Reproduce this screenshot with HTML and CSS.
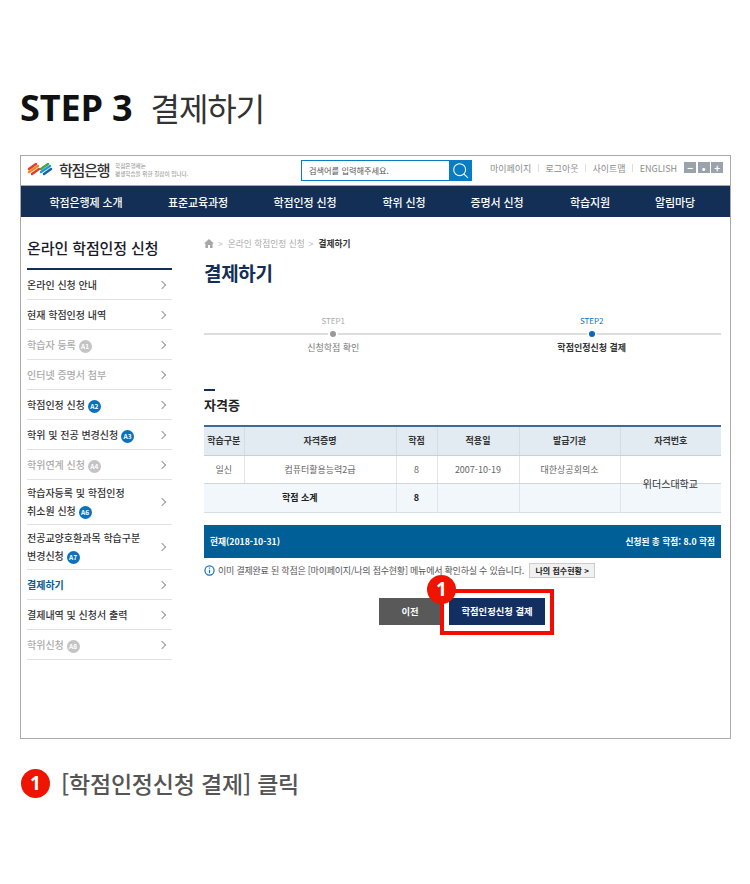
FILE: index.html
```html
<!DOCTYPE html>
<html lang="ko">
<head>
<meta charset="utf-8">
<title>STEP 3 결제하기</title>
<link rel="stylesheet" href="styles.css">
</head>
<body>
<h1 class="page-title"><span class="step-no">STEP 3</span><span class="step-name">결제하기</span></h1>
<div class="frame">
  <header class="top">
    <svg class="logo" viewBox="0 0 27 16" width="27" height="16" aria-hidden="true">
      <g fill="none" stroke-width="2.5" stroke-linecap="round">
        <path d="M2 8 L9 3" stroke="#e8392f"/><path d="M2 11 L11 5" stroke="#f08a1d"/><path d="M5 13 L12 8" stroke="#e8392f"/>
        <path d="M14 8 L21 3" stroke="#43a64a"/><path d="M14 11 L23 5" stroke="#1f9ad6"/><path d="M17 13 L24 8" stroke="#1b5fa8"/>
      </g>
    </svg>
    <span class="brand">학점은행</span>
    <span class="tagline">학점은행제는<br>평생학습을 위한 길잡이 입니다.</span>
    <div class="search">
      <span class="search-text">검색어를 입력해주세요.</span>
      <span class="search-btn">
        <svg viewBox="0 0 16 16" width="17" height="17" aria-hidden="true"><circle cx="7.2" cy="7.2" r="5.6" fill="none" stroke="#fff" stroke-width="1"/><path d="M11.3 11.3 L15 15" stroke="#fff" stroke-width="1"/></svg>
      </span>
    </div>
    <nav class="util">
      <span>마이페이지</span><i></i><span>로그아웃</span><i></i><span>사이트맵</span><i></i><span>ENGLISH</span>
    </nav>
    <div class="zoom-btns">
      <span class="zb">−</span><span class="zb">•</span><span class="zb">+</span>
    </div>
  </header>
  <nav class="gnb">
    <a>학점은행제 소개</a><a>표준교육과정</a><a>학점인정 신청</a><a>학위 신청</a><a>증명서 신청</a><a>학습지원</a><a>알림마당</a>
  </nav>
  <div class="body">
    <aside class="side">
      <h2 class="side-title">온라인 학점인정 신청</h2>
      <ul class="menu">
        <li><span>온라인 신청 안내</span></li>
        <li><span>현재 학점인정 내역</span></li>
        <li class="off"><span>학습자 등록 <b class="tag">A1</b></span></li>
        <li class="off"><span>인터넷 증명서 첨부</span></li>
        <li><span>학점인정 신청 <b class="tag">A2</b></span></li>
        <li><span>학위 및 전공 변경신청 <b class="tag">A3</b></span></li>
        <li class="off"><span>학위연계 신청 <b class="tag">A4</b></span></li>
        <li class="two"><span>학습자등록 및 학점인정<br>취소원 신청 <b class="tag">A6</b></span></li>
        <li class="two"><span>전공교양호환과목 학습구분<br>변경신청 <b class="tag">A7</b></span></li>
        <li class="cur"><span>결제하기</span></li>
        <li><span>결제내역 및 신청서 출력</span></li>
        <li class="off"><span>학위신청 <b class="tag">A8</b></span></li>
      </ul>
    </aside>
    <main class="main">
      <div class="crumb">
        <svg viewBox="0 0 10 9" width="10" height="9" aria-hidden="true"><path d="M5 0 L10 4.6 H8.6 V9 H6 V6 H4 V9 H1.4 V4.6 H0 Z" fill="#a8a8a8"/></svg>
        <em>&gt;</em><span>온라인 학점인정 신청</span><em>&gt;</em><strong>결제하기</strong>
      </div>
      <h2 class="main-title">결제하기</h2>
      <div class="steps">
        <div class="st"><span class="st-no">STEP1</span><span class="dot"></span><span class="st-label">신청학점 확인</span></div>
        <div class="st on"><span class="st-no">STEP2</span><span class="dot"></span><span class="st-label">학점인정신청 결제</span></div>
      </div>
      <h3 class="sec">자격증</h3>
      <div class="tbl-wrap">
        <table class="tbl">
          <colgroup><col class="c1"><col class="c2"><col class="c3"><col class="c4"><col class="c5"><col class="c6"></colgroup>
          <thead><tr><th>학습구분</th><th>자격증명</th><th>학점</th><th>적용일</th><th>발급기관</th><th>자격번호</th></tr></thead>
          <tbody>
            <tr><td>일신</td><td>컴퓨터활용능력2급</td><td>8</td><td>2007-10-19</td><td>대한상공회의소</td><td></td></tr>
            <tr class="sum"><td colspan="2">학점 소계</td><td>8</td><td></td><td></td><td></td></tr>
          </tbody>
        </table>
        <span class="overlay-cell">위더스대학교</span>
      </div>
      <div class="bar"><span>현재(2018-10-31)</span><span>신청된 총 학점: 8.0 학점</span></div>
      <div class="note">
        <svg viewBox="0 0 12 12" width="11" height="11" aria-hidden="true"><circle cx="6" cy="6" r="5" fill="none" stroke="#0a72bd" stroke-width="1.3"/><path d="M6 5.2 V9" stroke="#0a72bd" stroke-width="1.3"/><circle cx="6" cy="3.4" r=".8" fill="#0a72bd"/></svg>
        <span class="note-text">이미 결제완료 된 학점은 [마이페이지/나의 접수현황] 메뉴에서 확인하실 수 있습니다.</span>
        <span class="mini-btn">나의 접수현황 &gt;</span>
      </div>
      <div class="btns">
        <span class="btn prev">이전</span>
        <span class="btn pay">학점인정신청 결제
          <span class="hl"></span>
          <span class="num hl-num">1</span>
        </span>
      </div>
    </main>
  </div>
</div>
<p class="legend"><span class="num">1</span><span class="legend-text">[학점인정신청 결제] 클릭</span></p>
</body>
</html>
```
FILE: styles.css
```css
* { box-sizing: border-box; }
html, body { margin: 0; padding: 0; }
body {
  width: 750px;
  height: 884px;
  overflow: hidden;
  background: #fff;
  font-family: "Noto Sans CJK KR", "Noto Sans", sans-serif;
  color: #333;
}
.page-title {
  margin: 0;
  padding: 84px 0 0 20px;
  height: 155px;
  font-weight: 400;
  line-height: 46px;
  color: #222;
  display: flex;
  align-items: baseline;
}
.step-no { font: 700 36px/46px "Open Sans", sans-serif; color: #111; letter-spacing: -.15px; }
.step-name { font-size: 32px; margin-left: 18px; letter-spacing: -1px; color: #333; }

.frame {
  margin-left: 20px;
  width: 711px;
  height: 584px;
  border: 1px solid #aaa;
  overflow: hidden;
}
.top {
  height: 30px;
  display: flex;
  align-items: center;
  padding-left: 6px;
  border-bottom: 1px solid #aaa;
  position: relative;
}
.logo { flex: none; margin-top: -3px; }
.brand { width: 50px; font-size: 15px; font-weight: 500; color: #333; margin-left: 5px; letter-spacing: -1.2px; line-height: 20px; margin-top: -2px; white-space: nowrap; }
.tagline { font-size: 5.6px; line-height: 8.5px; color: #888; margin-left: 6px; margin-top: -1px; width: 186px; white-space: nowrap; flex: none; }
.search {
  width: 171px;
  height: 21px;
  display: flex;
  border: 1px solid #0a7cc4;
  border-width: 1px 0 1px 1px;
  flex: none;
}
.search-text { flex: 1; font-size: 8.2px; line-height: 19px; color: #555; padding-left: 7px; }
.search-btn { width: 23px; margin-top: -1px; height: 21px; background: #0a7cc4; display: flex; align-items: center; justify-content: center; }
.util { display: flex; align-items: center; margin-left: 18px; font-size: 9px; color: #8c8c8c; white-space: nowrap; margin-top: -5px; }
.util i { width: 1px; height: 8px; background: #ddd; margin: 0 6.5px; }
.zoom-btns { display: flex; gap: 1.5px; margin-left: 7px; margin-top: -6px; }
.zb { width: 12px; height: 11px; background: #9aa3ab; color: #fff; font-size: 10px; font-weight: 700; line-height: 11px; text-align: center; }

.gnb {
  height: 31px;
  background: #132f55;
  display: grid;
  grid-template-columns: 130px 94px 120px 78px 108px 78px 92px;
  align-items: center;
  text-align: center;
  color: #fff;
  font-size: 11px;
  font-weight: 500;
  letter-spacing: -.1px;
  white-space: nowrap;
}

.body { display: flex; }
.side { width: 145px; margin-left: 6px; flex: none; }
.side-title {
  margin: 0;
  height: 53px;
  padding-top: 20px;
  font-size: 15px;
  line-height: 22px;
  font-weight: 500;
  color: #1a1a2a;
  border-bottom: 2px solid #132f55;
  white-space: nowrap;
  letter-spacing: -.1px;
}
.menu { list-style: none; margin: 0; padding: 0; }
.menu li {
  height: 30px;
  display: flex;
  align-items: center;
  border-bottom: 1px solid #e2e2e2;
  font-size: 10px;
  font-weight: 500;
  line-height: 18px;
  color: #333;
  position: relative;
  white-space: nowrap;
}
.menu li::after {
  content: "";
  position: absolute;
  right: 7px;
  top: 50%;
  width: 5px;
  height: 5px;
  margin-top: -3px;
  border-top: 1px solid #999;
  border-right: 1px solid #999;
  transform: rotate(45deg);
}
.menu li.two { height: 45px; }
.menu li.off { color: #aaa; }
.menu li.cur { color: #0a5a96; font-weight: 700; }
.tag {
  display: inline-block;
  width: 13px;
  height: 13px;
  border-radius: 50%;
  background: #0a72bd;
  color: #fff;
  font-size: 6.5px;
  font-weight: 700;
  line-height: 13px;
  text-align: center;
  vertical-align: 0;
}
.off .tag { background: #c4c4c4; }

.main { margin-left: 32px; width: 517px; flex: none; }
.crumb {
  height: 12px;
  margin-top: 20px;
  display: flex;
  align-items: center;
  font-size: 8.7px;
  color: #aaa;
  white-space: nowrap;
}
.crumb em { font-style: normal; margin: 0 5px 0 4px; color: #bbb; }
.crumb strong { color: #333; font-weight: 700; }
.main-title { margin: 9px 0 0; font-size: 19px; line-height: 30px; font-weight: 700; color: #132f55; letter-spacing: -.3px; }
.steps {
  margin-top: 27px;
  display: grid;
  grid-template-columns: 1fr 1fr;
  position: relative;
}
.steps::before {
  content: "";
  position: absolute;
  left: 0;
  right: 0;
  top: 18px;
  height: 2px;
  background: #ddd;
}
.st { display: flex; flex-direction: column; align-items: center; position: relative; }
.st-no { font-size: 8px; line-height: 12px; color: #aaa; }
.dot { width: 6px; height: 6px; border-radius: 50%; background: #999; margin: 4px 0; box-shadow: 0 0 0 2px #fff; }
.st-label { font-size: 9px; line-height: 14px; color: #777; }
.on .st-no { color: #0a72bd; }
.on .dot { background: #0a66c0; }
.on .st-label { color: #333; font-weight: 700; }

.sec {
  margin: 34px 0 0;
  font-size: 13px;
  line-height: 18px;
  font-weight: 700;
  color: #222;
  padding-top: 7px;
  position: relative;
}
.sec::before {
  content: "";
  position: absolute;
  left: 0;
  top: 0;
  width: 11px;
  height: 2px;
  background: #132f55;
}
.tbl-wrap { position: relative; margin-top: 11px; }
.tbl {
  width: 100%;
  border-collapse: collapse;
  table-layout: fixed;
  border-top: 2px solid #3f6a96;
  border-bottom: 1px solid #d6dde2;
  font-size: 9px;
}
.c1 { width: 40px; } .c2 { width: 152px; } .c3 { width: 41px; } .c4 { width: 82px; } .c5 { width: 101px; }
.tbl th {
  height: 29px;
  background: #e3ebf2;
  font-weight: 700;
  color: #333;
  border-left: 1px solid #d5dce2;
  border-bottom: 1px solid #c6d0d9;
  padding: 0;
}
.tbl td {
  height: 28px;
  text-align: center;
  color: #666;
  border-left: 1px solid #dfe4e8;
  border-bottom: 1px solid #cfd6dc;
  padding: 0;
}
.tbl th:first-child, .tbl td:first-child { border-left: 0; }
.tbl .sum td { height: 29px; background: #f1f7fb; color: #222; font-weight: 700; border-bottom: 0; }
.overlay-cell {
  position: absolute;
  right: 23px;
  top: 51px;
  font-size: 10px;
  line-height: 16px;
  color: #333;
}
.bar {
  margin-top: 12px;
  height: 33px;
  background: #005f96;
  color: #fff;
  font-size: 8.7px;
  font-weight: 700;
  display: flex;
  align-items: center;
  justify-content: space-between;
  padding: 0 6px 0 6px;
}
.note {
  margin-top: 5px;
  height: 16px;
  display: flex;
  align-items: center;
  gap: 3px;
  font-size: 9px;
  color: #555;
  white-space: nowrap;
}
.note-text { letter-spacing: -.22px; }
.mini-btn {
  margin-left: 2px;
  height: 15px;
  padding: 0 5.5px;
  background: #f1f1f1;
  border: 1px solid #ccc;
  color: #222;
  font-size: 8px;
  font-weight: 700;
  line-height: 13px;
}
.btns { margin-top: 19px; display: flex; padding-left: 175px; gap: 8px; }
.btn {
  height: 27px;
  display: flex;
  align-items: center;
  justify-content: center;
  color: #fff;
  font-size: 9.3px;
  font-weight: 700;
  white-space: nowrap;
}
.prev { width: 62px; background: #595959; }
.pay { width: 96px; background: #132f62; position: relative; }
.hl {
  position: absolute;
  left: -9px;
  top: -9px;
  width: 114px;
  height: 46px;
  border: 4px solid #f20d00;
}
.num {
  display: inline-block;
  width: 29px;
  height: 29px;
  border-radius: 50%;
  background: #ee1400;
  color: #fff;
  font: 700 19px/29px "Open Sans", sans-serif;
  text-align: center;
  flex: none;
}
.hl-num { position: absolute; left: -22px; top: -23px; }
.legend {
  margin: 29px 0 0 21px;
  display: flex;
  align-items: center;
  gap: 11px;
}
.legend-text { font-size: 23px; font-weight: 500; line-height: 30px; color: #555; letter-spacing: -.2px; }
```
